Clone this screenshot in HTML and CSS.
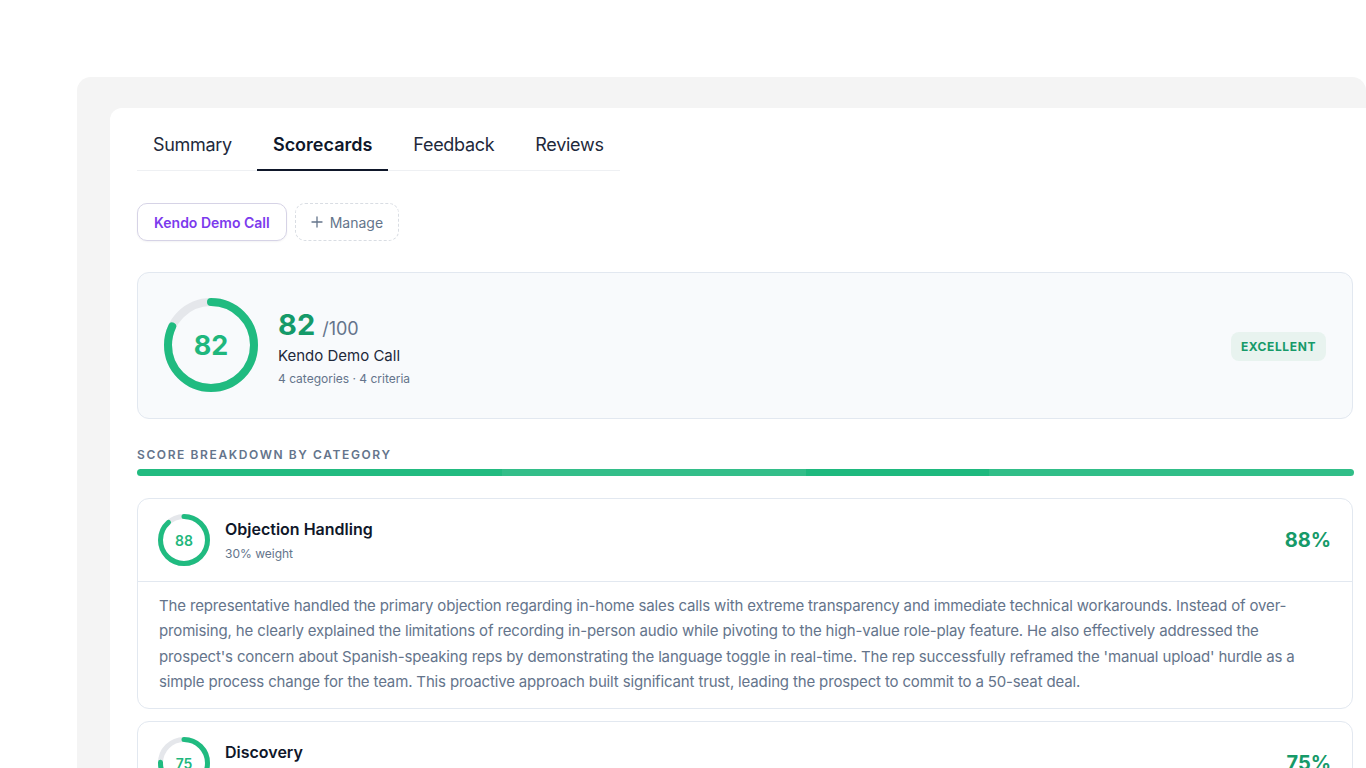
FILE: index.html
```html
<!DOCTYPE html>
<html lang="en">
<head>
<meta charset="utf-8">
<title>Scorecards</title>
<link rel="stylesheet" href="styles.css">
</head>
<body>
<div class="page">
  <div class="panel">
    <div class="card">
      <nav class="tabs">
        <a class="tab">Summary</a>
        <a class="tab active">Scorecards</a>
        <a class="tab">Feedback</a>
        <a class="tab">Reviews</a>
      </nav>

      <div class="chips">
        <button class="chip chip-active">Kendo Demo Call</button>
        <button class="chip chip-add">
          <svg width="12" height="12" viewBox="0 0 12 12"><path d="M6 1v10M1 6h10" stroke="#64748b" stroke-width="1.3" stroke-linecap="round" fill="none"/></svg>
          Manage
        </button>
      </div>

      <section class="overview">
        <div class="ring ring-lg">
          <svg width="94" height="94" viewBox="0 0 94 94">
            <circle cx="47" cy="47" r="43" class="track" stroke-width="8"/>
            <circle cx="47" cy="47" r="43" class="arc" stroke-width="8" stroke-dasharray="221.5 270.2" transform="rotate(-90 47 47)"/>
          </svg>
          <span class="ring-num">82</span>
        </div>
        <div class="ov-info">
          <div class="ov-score"><span class="big">82</span><span class="of">/100</span></div>
          <div class="ov-name">Kendo Demo Call</div>
          <div class="ov-meta">4 categories · 4 criteria</div>
        </div>
        <span class="badge">EXCELLENT</span>
      </section>

      <h3 class="section-title">SCORE BREAKDOWN BY CATEGORY</h3>
      <div class="breakdown">
        <span class="seg s1" style="flex-basis:30%"></span>
        <span class="seg s2" style="flex-basis:25%"></span>
        <span class="seg s3" style="flex-basis:15%"></span>
        <span class="seg s4" style="flex-basis:30%"></span>
      </div>

      <article class="cat">
        <header class="cat-head">
          <div class="ring ring-sm">
            <svg width="52" height="52" viewBox="0 0 52 52">
              <circle cx="26" cy="26" r="23.5" class="track" stroke-width="5"/>
              <circle cx="26" cy="26" r="23.5" class="arc" stroke-width="5" stroke-dasharray="129.9 147.7" transform="rotate(-90 26 26)"/>
            </svg>
            <span class="ring-num">88</span>
          </div>
          <div class="cat-info">
            <div class="cat-name">Objection Handling</div>
            <div class="cat-weight">30% weight</div>
          </div>
          <div class="cat-pct">88%</div>
        </header>
        <p class="cat-body">The representative handled the primary objection regarding in-home sales calls with extreme transparency and immediate technical workarounds. Instead of over-promising, he clearly explained the limitations of recording in-person audio while pivoting to the high-value role-play feature. He also effectively addressed the prospect's concern about Spanish-speaking reps by demonstrating the language toggle in real-time. The rep successfully reframed the 'manual upload' hurdle as a simple process change for the team. This proactive approach built significant trust, leading the prospect to commit to a 50-seat deal.</p>
      </article>

      <article class="cat">
        <header class="cat-head">
          <div class="ring ring-sm">
            <svg width="52" height="52" viewBox="0 0 52 52">
              <circle cx="26" cy="26" r="23.5" class="track" stroke-width="5"/>
              <circle cx="26" cy="26" r="23.5" class="arc" stroke-width="5" stroke-dasharray="110.7 147.7" transform="rotate(-90 26 26)"/>
            </svg>
            <span class="ring-num">75</span>
          </div>
          <div class="cat-info">
            <div class="cat-name">Discovery</div>
            <div class="cat-weight">25% weight</div>
          </div>
          <div class="cat-pct">75%</div>
        </header>
        <p class="cat-body">The rep asked solid discovery questions about team size, current coaching workflow and call volume, uncovering the core pain points before moving into the demo.</p>
      </article>
    </div>
  </div>
</div>
</body>
</html>
```

FILE: styles.css
```css
* { box-sizing: border-box; }
html, body {
  margin: 0;
  padding: 0;
  overflow: hidden;
  height: 768px;
  background: #ffffff;
}
body {
  font-family: "Inter", "Liberation Sans", sans-serif;
  color: #0f172a;
}
.page {
  padding: 77px 0 0 77px;
}
.panel {
  width: 1289px;
  background: #f4f4f4;
  border-radius: 14px 14px 0 0;
  padding: 31px 0 0 33px;
  height: 720px;
  overflow: hidden;
}
.card {
  width: 1270px;
  background: #ffffff;
  border-radius: 12px 0 0 0;
  padding: 19px 27px 0 27px;
  min-height: 700px;
}

/* tabs */
.tabs {
  display: flex;
  gap: 9px;
  width: 483px;
  border-bottom: 1px solid #eef0f3;
}
.tab {
  padding: 8px 16px 14px;
  font-size: 18px;
  line-height: 20px;
  color: #1e293b;
  border-bottom: 2px solid transparent;
  margin-bottom: -1px;
  letter-spacing: -0.3px;
}
.tab.active {
  font-weight: 600;
  color: #0f172a;
  border-bottom-color: #0f172a;
  letter-spacing: 0;
}

/* chips */
.chips {
  display: flex;
  gap: 8px;
  margin-top: 32px;
}
.chip {
  height: 38px;
  border-radius: 10px;
  font-family: inherit;
  font-size: 14px;
  background: #fff;
  display: inline-flex;
  align-items: center;
  gap: 7px;
}
.chip-active {
  border: 1px solid #d6d3e6;
  color: #7c3aed;
  font-weight: 600;
  padding: 0 16px;
  box-shadow: 0 1px 2px rgba(15, 23, 42, 0.05);
}
.chip-add {
  border: 1px dashed #d9dde3;
  color: #64748b;
  padding: 0 15px;
}

/* overview */
.overview {
  margin-top: 31px;
  display: flex;
  align-items: center;
  background: #f8fafc;
  border: 1px solid #e2e8f0;
  border-radius: 12px;
  padding: 25px 26px 26px;
  width: 1216px;
}
.ring {
  position: relative;
  flex: none;
  display: flex;
  align-items: center;
  justify-content: center;
}
.ring svg { display: block; }
.track { fill: none; stroke: #e5e7eb; }
.arc { fill: none; stroke: #20bb80; stroke-linecap: round; }
.ring-num {
  position: absolute;
  inset: 0;
  display: flex;
  align-items: center;
  justify-content: center;
  color: #1fb77d;
  font-weight: 700;
}
.ring-lg .ring-num { font-size: 27px; }
.ring-sm .ring-num { font-size: 14px; font-weight: 600; }

.ov-info { margin-left: 20px; flex: 1; margin-top: 3px; }
.ov-score { display: flex; align-items: baseline; gap: 7px; }
.big {
  font-size: 29px;
  font-weight: 700;
  color: #159a69;
  line-height: 34px;
}
.of { font-size: 18px; color: #64748b; }
.ov-name { font-size: 15px; color: #1e293b; margin-top: 4px; }
.ov-meta { font-size: 12px; color: #64748b; margin-top: 6px; }
.badge {
  background: #e8f3ef;
  color: #169a69;
  font-size: 12px;
  font-weight: 700;
  letter-spacing: 0.6px;
  height: 29px;
  display: flex;
  align-items: center;
  padding: 0 10px;
  border-radius: 8px;
  margin-top: 3px;
}

/* breakdown */
.section-title {
  margin: 28px 0 0;
  font-size: 12px;
  font-weight: 600;
  letter-spacing: 1.6px;
  color: #64748b;
  line-height: 16px;
}
.breakdown {
  display: flex;
  margin-top: 6px;
  height: 7px;
  width: 1217px;
  border-radius: 4px;
  overflow: hidden;
}
.seg { display: block; flex-grow: 0; flex-shrink: 0; }
.s1 { background: #22bb80; }
.s2 { background: #33be89; }
.s3 { background: #1eb97e; }
.s4 { background: #31be88; }

/* category cards */
.cat {
  margin-top: 22px;
  width: 1216px;
  border: 1px solid #e2e8f0;
  border-radius: 12px;
  background: #fff;
}
.cat + .cat { margin-top: 12px; }
.cat-head {
  display: flex;
  align-items: center;
  padding: 15px 20px;
  border-bottom: 1px solid #e2e8f0;
}
.cat-info { margin-left: 15px; flex: 1; }
.cat-name { font-size: 16px; font-weight: 600; color: #0f172a; line-height: 20px; }
.cat-weight { font-size: 12px; color: #64748b; margin-top: 7px; }
.cat-pct { font-size: 20px; font-weight: 700; color: #169a69; margin-right: 1px; }
.cat-body {
  margin: 0;
  padding: 11px 21px 14px;
  font-size: 15px;
  line-height: 25.3px;
  letter-spacing: -0.15px;
  color: #64748b;
}
```
